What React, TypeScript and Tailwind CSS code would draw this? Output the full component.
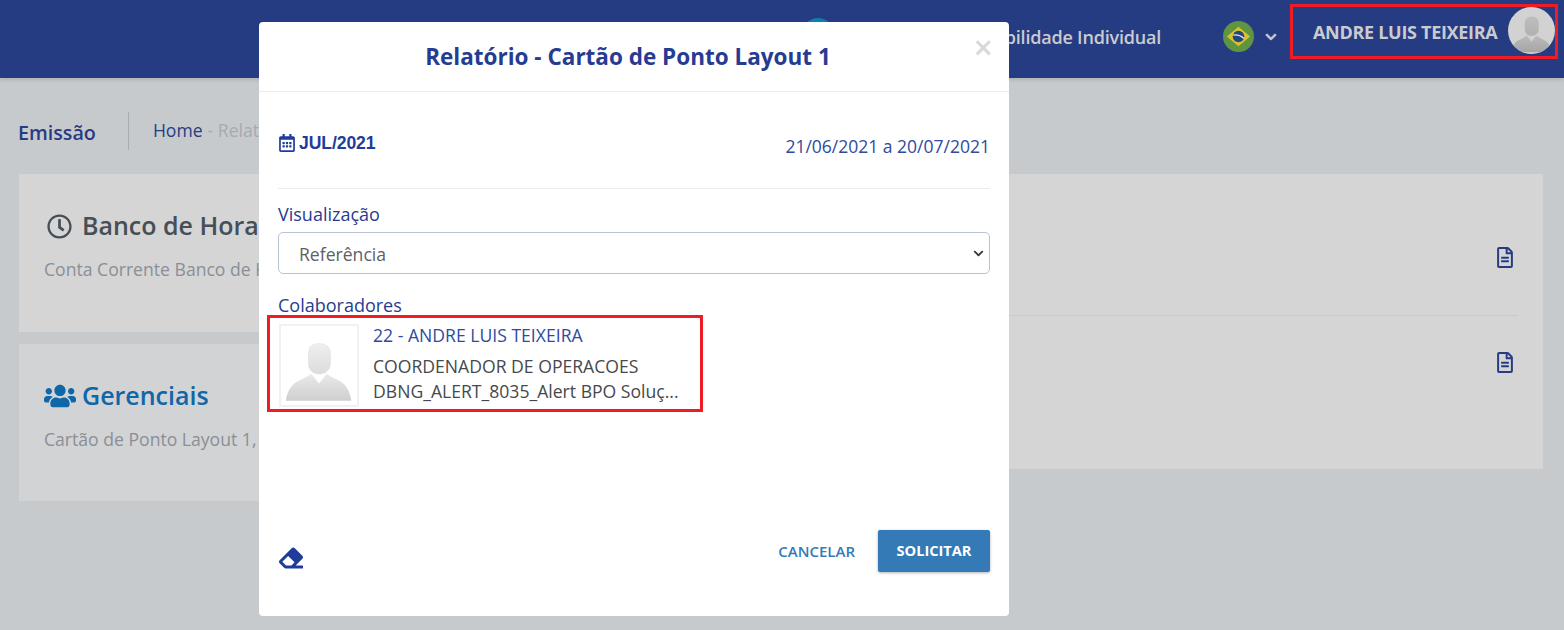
import React from 'react';
import { FaRegClock, FaUsers, FaRegCalendarAlt, FaEraser, FaRegFileAlt, FaChevronDown } from 'react-icons/fa';

const font = { fontFamily: '"Open Sans", "Noto Sans", sans-serif' };

// Silhueta padrão do avatar (sem foto)
function Silhouette({ className }: { className?: string }) {
  return (
    <svg viewBox="0 0 80 80" className={className}>
      <defs>
        <linearGradient id="corpo" x1="0" y1="0" x2="0" y2="1">
          <stop offset="0" stopColor="#e9e9e9" />
          <stop offset="1" stopColor="#cfcfcf" />
        </linearGradient>
        <linearGradient id="cabeca" x1="0" y1="0" x2="0" y2="1">
          <stop offset="0" stopColor="#efefef" />
          <stop offset="1" stopColor="#dcdcdc" />
        </linearGradient>
      </defs>
      <path d="M5 77 C7 64 13 58 23 54 L32 49 L40 59 L48 49 L57 54 C67 58 72 64 74 77 Z" fill="url(#corpo)" />
      <path d="M29 28 C29 20 33 17 40 17 C47 17 52 20 52 28 L52 38 C52 45 46 49 40 49 C34 49 29 45 29 38 Z" fill="url(#cabeca)" stroke="#d6d6d6" strokeWidth="0.5" />
    </svg>
  );
}

function BrazilFlag() {
  return (
    <svg viewBox="0 0 32 32" className="w-[31px] h-[31px] mb-[5px]">
      <circle cx="16" cy="16" r="16" fill="#5f9440" />
      <path d="M16 6 L28 16 L16 26 L4 16 Z" fill="#d9c22e" />
      <circle cx="16" cy="16" r="6" fill="#25457f" />
      <path d="M10.5 14.5 C14 14 19 15.5 21.6 18" stroke="#e8e8e8" strokeWidth="1.3" fill="none" />
    </svg>
  );
}

function Header() {
  return (
    <header className="h-[78px] bg-[#263c82] flex items-center justify-end shrink-0 shadow-[0_2px_4px_rgba(0,0,0,0.12)]">
      <div className="w-[32px] h-[32px] rounded-full bg-[#0f7fa8] mb-[10px] mr-[120px]" />
      <span className="text-[#c9cbd0] text-[18px] font-semibold tracking-[-0.2px] mr-[62px] mb-[4px]">Contabilidade Individual</span>
      <BrazilFlag />
      <FaChevronDown className="text-[#c9cbd0] w-[12px] h-[12px] ml-[11px] mr-[13px] mb-[5px] stroke-current stroke-[30]" />
      <div className="w-[268px] h-[55px] mr-[6px] mb-[15px] flex items-center border-[3px] border-[#ee1c25] pl-[20px]">
        <span className="text-[#c9cbd0] text-[18px] font-bold tracking-[-0.3px] whitespace-nowrap mt-[2px]">ANDRE LUIS TEIXEIRA</span>
        <div className="w-[47px] h-[47px] rounded-full bg-[#d2d2d2] overflow-hidden ml-[11px] shrink-0 mt-[-3px]">
          <Silhouette className="w-full h-full brightness-[0.8]" />
        </div>
      </div>
    </header>
  );
}

function Breadcrumb() {
  return (
    <div className="flex items-center h-[36px] mt-[35px] pl-[18px]">
      <span className="text-[#263c82] text-[19.7px] font-semibold mt-[4px]">Emissão</span>
      <div className="w-px h-[38px] bg-[#a9adb1] ml-[32px] mr-[24px]" />
      <span className="text-[#263c82] text-[17.6px] mt-[-1px]">Home</span>
      <span className="text-[#a6abb0] text-[17.6px] mt-[-1px] ml-[5px]">- Relatórios</span>
    </div>
  );
}

function Cards() {
  return (
    <div className="flex gap-[20px] pl-[19px] pr-[21px] mt-[25px]">
      <div className="w-[480px] flex flex-col gap-[12px] shrink-0">
        <div className="h-[158px] bg-[#d5d5d5] pl-[25px] pt-[34px]">
          <div className="flex items-center gap-[10px] text-[#454f57] pl-[3px]">
            <FaRegClock className="w-[25px] h-[25px] mt-[2px]" />
            <span className="text-[25px] leading-[34px] font-semibold whitespace-nowrap">Banco de Horas</span>
          </div>
          <p className="text-[#8a8f95] text-[17.6px] mt-[14px] whitespace-nowrap">Conta Corrente Banco de Horas</p>
        </div>
        <div className="h-[157px] bg-[#d2d3d5] pl-[25px] pt-[34px]">
          <div className="flex items-center gap-[6px] text-[#0f66a8]">
            <FaUsers className="w-[32px] h-[26px] mt-[2px]" />
            <span className="text-[25px] leading-[34px] font-semibold">Gerenciais</span>
          </div>
          <p className="text-[#8a8f95] text-[17.6px] mt-[14px] whitespace-nowrap">Cartão de Ponto Layout 1, Layout 2</p>
        </div>
      </div>
      <div className="flex-1 h-[295px] bg-[#d5d5d5] flex flex-col pr-[25px]">
        <div className="h-[142px] border-b border-[#cacaca] flex justify-end pt-[73px] pr-[5px]">
          <FaRegFileAlt className="w-[16px] h-[21px] text-[#263c82]" />
        </div>
        <div className="flex justify-end pt-[36px] pr-[5px]">
          <FaRegFileAlt className="w-[16px] h-[21px] text-[#263c82]" />
        </div>
      </div>
    </div>
  );
}

function Modal() {
  return (
    <div className="absolute left-[259px] top-[22px] w-[750px] h-[594px] bg-white rounded-[4px] flex flex-col">
      <div className="relative h-[70px] border-b border-[#e9ecef] flex items-center justify-center shrink-0">
        <h2 className="text-[#263c92] text-[22.5px] font-bold mr-[12px] whitespace-nowrap">Relatório - Cartão de Ponto Layout 1</h2>
        <span className="absolute right-[16px] top-[5px] text-[#d9d9d9] text-[34px] font-semibold leading-[40px]">×</span>
      </div>

      <div className="px-[19px] flex-1 flex flex-col">
        <div className="h-[97px] border-b border-[#e9ecef] flex justify-between shrink-0">
          <div className="flex items-center gap-[4px] h-[20px] mt-[41px] ml-[1px] text-[#1f3c9a]">
            <FaRegCalendarAlt className="w-[16px] h-[18px]" />
            <span className="text-[17.6px] font-bold tracking-[-0.1px]" style={{ fontFamily: '"Liberation Sans", sans-serif' }}>JUL/2021</span>
          </div>
          <span className="text-[#2f4a9e] text-[17.5px] mt-[41px]">21/06/2021 a 20/07/2021</span>
        </div>

        <label className="text-[#263c92] text-[18px] font-medium mt-[13px] leading-[24px]">Visualização</label>
        <div className="h-[42px] mt-[6px] border border-[#b9c2d6] rounded-[5px] flex items-center justify-between pl-[20px] pr-[4px] shrink-0">
          <span className="text-[#5c6166] text-[17.6px] mt-[3px]">Referência</span>
          <FaChevronDown className="w-[13px] h-[11px] text-[#33383d]" />
        </div>

        <label className="text-[#263c92] text-[18px] font-medium mt-[19px] leading-[24px]">Colaboradores</label>
        <div className="w-[436px] h-[97px] ml-[-11px] mt-[-2px] border-[3px] border-[#ee1c25] flex items-start pl-[9px] pt-[6px] shrink-0">
          <div className="w-[80px] h-[83px] border-2 border-[#f1f1f1] shrink-0">
            <Silhouette className="w-full h-full" />
          </div>
          <div className="ml-[14px] min-w-0 w-[306px]">
            <p className="text-[#2f4a9e] text-[17.6px] leading-[22px]">22 - ANDRE LUIS TEIXEIRA</p>
            <p className="text-[#45494d] text-[17.6px] leading-[24px] mt-[8px] whitespace-nowrap">COORDENADOR DE OPERACOES</p>
            <p className="text-[#45494d] text-[17.6px] leading-[24px] mt-[1px] whitespace-nowrap">DBNG_ALERT_8035_Alert BPO Soluç...</p>
          </div>
        </div>

        <div className="flex-1 flex items-end justify-between pb-[44px]">
          <FaEraser className="w-[26px] h-[24px] text-[#1f3c9a] mb-[2px]" />
          <div className="flex items-center gap-[23px]">
            <span className="text-[#337ab7] text-[15px] font-semibold">CANCELAR</span>
            <button className="w-[112px] h-[42px] bg-[#337ab7] rounded-[2px] text-white text-[14.6px] font-bold shadow-[0_1px_3px_rgba(0,0,0,0.3)]">SOLICITAR</button>
          </div>
        </div>
      </div>
    </div>
  );
}

export default function App() {
  return (
    <div className="relative w-[1564px] h-[630px] bg-[#c6cacd] overflow-hidden flex flex-col" style={font}>
      <Header />
      <Breadcrumb />
      <Cards />
      <Modal />
    </div>
  );
}
